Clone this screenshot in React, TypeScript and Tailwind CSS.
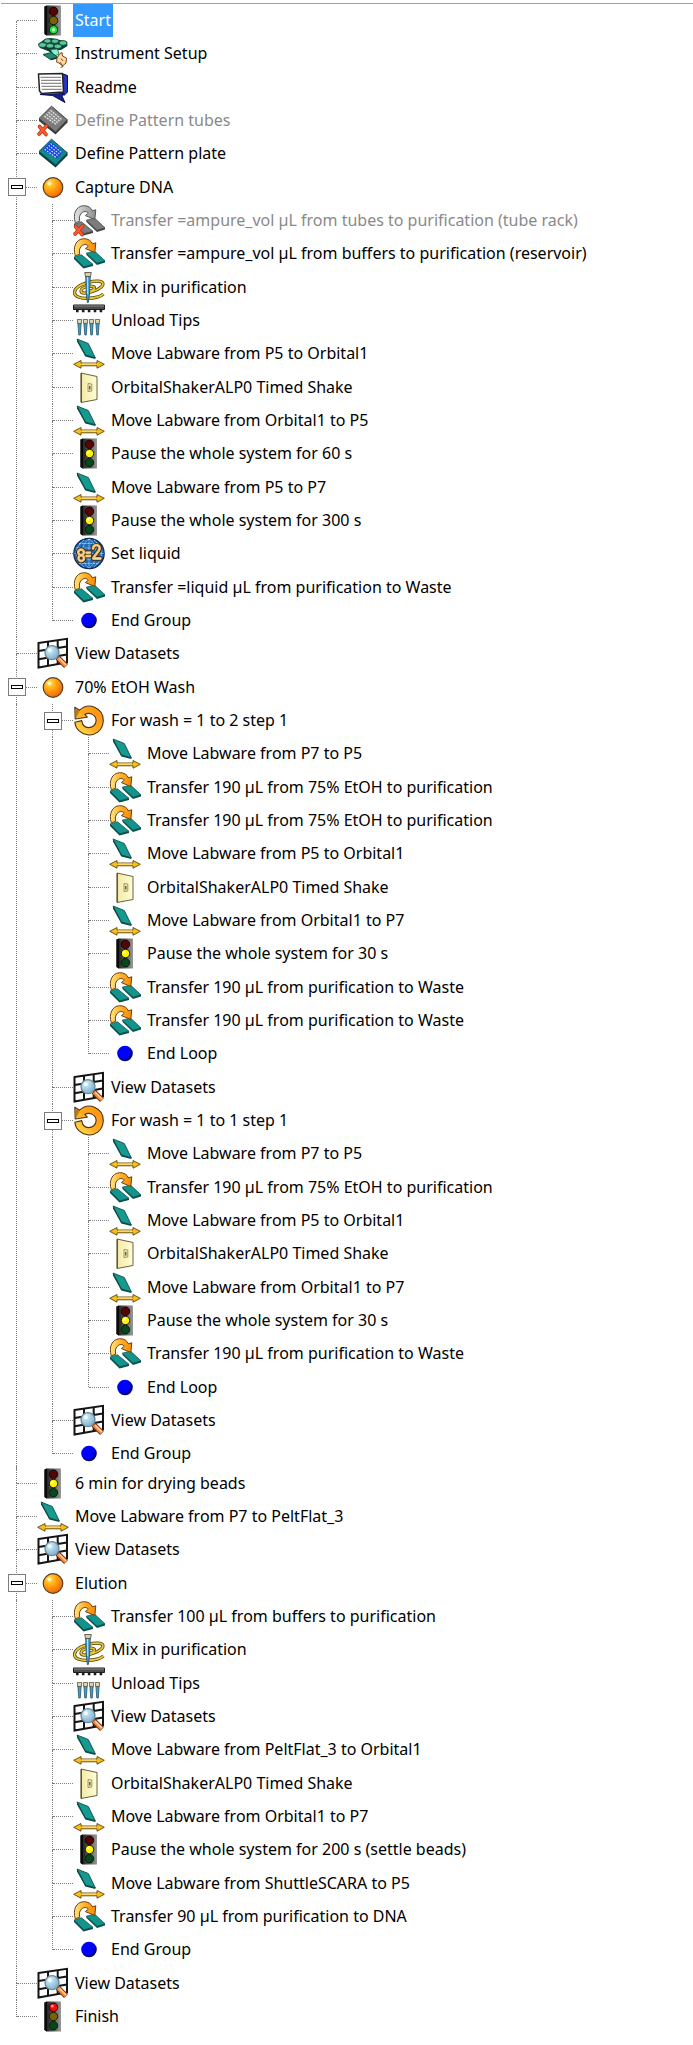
import { useState, type ReactNode } from "react";

type IconName =
  | "start" | "pause" | "finish" | "setup" | "note" | "pattern" | "patternOff"
  | "group" | "transfer" | "transferOff" | "mix" | "unload" | "move" | "orbital"
  | "liquid" | "end" | "view" | "loop";

type Step = {
  id: number;
  icon: IconName;
  label: string;
  disabled?: boolean;
  tight?: boolean;
  children?: Step[];
};

let nextId = 0;
const step = (icon: IconName, label: string, extra: Partial<Step> = {}): Step => ({
  id: nextId++,
  icon,
  label,
  ...extra,
});
const branch = (icon: IconName, label: string, build: () => Step[]): Step => {
  const node = step(icon, label);
  node.children = build();
  return node;
};

const steps: Step[] = [
  step("start", "Start"),
  step("setup", "Instrument Setup"),
  step("note", "Readme"),
  step("patternOff", "Define Pattern tubes", { disabled: true }),
  step("pattern", "Define Pattern plate"),
  branch("group", "Capture DNA", () => [
    step("transferOff", "Transfer =ampure_vol µL from tubes to purification (tube rack)", { disabled: true }),
    step("transfer", "Transfer =ampure_vol µL from buffers to purification (reservoir)"),
    step("mix", "Mix in purification"),
    step("unload", "Unload Tips"),
    step("move", "Move Labware from P5 to Orbital1"),
    step("orbital", "OrbitalShakerALP0 Timed Shake"),
    step("move", "Move Labware from Orbital1 to P5"),
    step("pause", "Pause the whole system for 60 s"),
    step("move", "Move Labware from P5 to P7"),
    step("pause", "Pause the whole system for 300 s"),
    step("liquid", "Set liquid"),
    step("transfer", "Transfer =liquid µL from purification to Waste"),
    step("end", "End Group"),
  ]),
  step("view", "View Datasets"),
  branch("group", "70% EtOH Wash", () => [
    branch("loop", "For wash = 1 to 2 step 1", () => [
      step("move", "Move Labware from P7 to P5"),
      step("transfer", "Transfer 190 µL from 75% EtOH to purification"),
      step("transfer", "Transfer 190 µL from 75% EtOH to purification"),
      step("move", "Move Labware from P5 to Orbital1"),
      step("orbital", "OrbitalShakerALP0 Timed Shake"),
      step("move", "Move Labware from Orbital1 to P7"),
      step("pause", "Pause the whole system for 30 s"),
      step("transfer", "Transfer 190 µL from purification to Waste"),
      step("transfer", "Transfer 190 µL from purification to Waste"),
      step("end", "End Loop"),
    ]),
    step("view", "View Datasets"),
    branch("loop", "For wash = 1 to 1 step 1", () => [
      step("move", "Move Labware from P7 to P5"),
      step("transfer", "Transfer 190 µL from 75% EtOH to purification"),
      step("move", "Move Labware from P5 to Orbital1"),
      step("orbital", "OrbitalShakerALP0 Timed Shake"),
      step("move", "Move Labware from Orbital1 to P7"),
      step("pause", "Pause the whole system for 30 s"),
      step("transfer", "Transfer 190 µL from purification to Waste"),
      step("end", "End Loop"),
    ]),
    step("view", "View Datasets"),
    step("end", "End Group"),
  ]),
  step("pause", "6 min for drying beads", { tight: true }),
  step("move", "Move Labware from P7 to PeltFlat_3"),
  step("view", "View Datasets"),
  branch("group", "Elution", () => [
    step("transfer", "Transfer 100 µL from buffers to purification"),
    step("mix", "Mix in purification"),
    step("unload", "Unload Tips"),
    step("view", "View Datasets"),
    step("move", "Move Labware from PeltFlat_3 to Orbital1"),
    step("orbital", "OrbitalShakerALP0 Timed Shake"),
    step("move", "Move Labware from Orbital1 to P7"),
    step("pause", "Pause the whole system for 200 s (settle beads)"),
    step("move", "Move Labware from ShuttleSCARA to P5"),
    step("transfer", "Transfer 90 µL from purification to DNA"),
    step("end", "End Group"),
  ]),
  step("view", "View Datasets"),
  step("finish", "Finish"),
];

function Gradients() {
  return (
    <svg width="0" height="0" className="block" aria-hidden="true">
      <defs>
        <linearGradient id="case">
          <stop offset="0" stopColor="#111" />
          <stop offset="0.3" stopColor="#3a3a3a" />
          <stop offset="1" stopColor="#9a9a9a" />
        </linearGradient>
        <radialGradient id="sun" cx="0.33" cy="0.28" r="0.8">
          <stop offset="0" stopColor="#ffe14a" />
          <stop offset="0.5" stopColor="#ff9d0c" />
          <stop offset="1" stopColor="#f25c05" />
        </radialGradient>
        <radialGradient id="blue" cx="0.4" cy="0.38" r="0.65">
          <stop offset="0.6" stopColor="#0000ff" />
          <stop offset="1" stopColor="#00004a" />
        </radialGradient>
        <linearGradient id="arrow">
          <stop offset="0" stopColor="#ffe680" />
          <stop offset="0.6" stopColor="#ffa51e" />
          <stop offset="1" stopColor="#f58a0a" />
        </linearGradient>
        <linearGradient id="arrowGray">
          <stop offset="0" stopColor="#e4e4e4" />
          <stop offset="1" stopColor="#8e8e8e" />
        </linearGradient>
        <linearGradient id="ring" x1="1" y1="0" x2="0" y2="1">
          <stop offset="0" stopColor="#ff8a0c" />
          <stop offset="0.5" stopColor="#ffa820" />
          <stop offset="1" stopColor="#ffe95a" />
        </linearGradient>
        <radialGradient id="lens" cx="0.35" cy="0.3" r="0.8">
          <stop offset="0" stopColor="#d8f0fa" />
          <stop offset="1" stopColor="#6fa8c8" />
        </radialGradient>
        <linearGradient id="card">
          <stop offset="0" stopColor="#f3eaa6" />
          <stop offset="1" stopColor="#fffcd8" />
        </linearGradient>
      </defs>
    </svg>
  );
}

function Light({ on }: { on: "red" | "yellow" | "green" }) {
  return (
    <>
      <path d="M7.5 1.5 10 0.5H24V30.5H9.5L7.5 29Z" fill="url(#case)" />
      <path d="M7.5 1.5 10 0.5V30.5L7.5 29Z" fill="#0a0a0a" />
      <circle cx="16.5" cy="6.3" r="4.2" fill={on === "red" ? "#f40d0d" : "#560404"} stroke="#150505" />
      <circle cx="16.5" cy="15.5" r="4.2" fill={on === "yellow" ? "#fff200" : "#7a6400"} stroke="#1c1800" />
      <circle cx="16.5" cy="24.7" r="4.2" fill={on === "green" ? "#17e63c" : "#06481c"} stroke="#03200c" />
      {on === "red" && <circle cx="15.3" cy="5.2" r="1.4" fill="#ff9a9a" />}
      {on === "yellow" && <circle cx="15.3" cy="14.3" r="1.4" fill="#ffffb0" />}
      {on === "green" && <circle cx="16.5" cy="24.7" r="1.8" fill="#b4ffc0" />}
    </>
  );
}

function Cross() {
  return (
    <g strokeLinecap="round">
      <path d="M2.5 21.5 9 29.5M9.5 21 2 29" stroke="#b8300c" strokeWidth="3.6" />
      <path d="M2.5 21.5 9 29.5M9.5 21 2 29" stroke="#ff5a30" strokeWidth="2.2" />
    </g>
  );
}

function Pattern({ off }: { off?: boolean }) {
  return (
    <>
      <path d="M2 13.5V16L18.5 29.5 30.5 17.5V14.5Z" fill={off ? "#3c3c3c" : "#0b3f40"} />
      <path d="M14.5 1.2 30.3 14.8 18.7 27 2 13.5Z" fill={off ? "#7a7a7a" : "#14888a"} stroke={off ? "#444" : "#0d4f50"} />
      <path d="M14 3.6 26 14 20 20.3 5.5 11.8Z" fill={off ? "#8a8a8a" : "#1546dc"} />
      <path
        d="M7.5 11.2 19 19.4M9.6 9.4 21 17.8M11.6 7.4 22.8 16.2M13.6 5.4 24.4 14.4"
        stroke={off ? "#f0f0f0" : "#d2e6ff"}
        strokeWidth="1.1"
        strokeDasharray="1.8 1.2"
      />
      {off && <Cross />}
    </>
  );
}

function Transfer({ off }: { off?: boolean }) {
  const plate = off ? "#7c7c7c" : "#12938c";
  const edge = off ? "#454545" : "#0b4f4c";
  return (
    <>
      <path d="M1 19V21L10.5 30.5 20 28V26.5Z" fill={edge} />
      <path d="M13.5 15.5V17L24 27 32 24.5V23Z" fill={edge} />
      <path d="M1 19 8.5 16.8 20 26.3 10.8 28.8Z" fill={plate} stroke={edge} strokeWidth="0.7" />
      <path d="M13.2 15.2 21.5 13 32 22.8 24 25.3Z" fill={plate} stroke={edge} strokeWidth="0.7" />
      <path
        d="M2.3 17.8C-0.4 9 3 1.2 10.5 0.7 15.2 0.5 18.2 2.8 19.4 5.8L22.8 4.8 21.8 14.4 12.4 10.6 15.4 8.2C13.6 5.9 10.6 6 8.4 8.2 6.2 10.5 6 13 6.8 16.2Z"
        fill={off ? "url(#arrowGray)" : "url(#arrow)"}
        stroke={off ? "#555" : "#6b4208"}
        strokeWidth="1"
        strokeLinejoin="round"
      />
      {off && <Cross />}
    </>
  );
}

const digits =
  "M8 11.6A2.8 2.8 0 1 0 8.1 11.6M8.2 17.4A2.8 2.8 0 1 0 8.3 17.4M13.5 14.6H17M13.5 18H17M20 10.5C20.5 5.8 27.3 6.3 26.6 10.8 26.2 13.8 21.5 16.6 20.3 20.5H27.4";

const art: Record<IconName, ReactNode> = {
  start: <Light on="green" />,
  pause: <Light on="yellow" />,
  finish: <Light on="red" />,
  setup: (
    <>
      <path d="M1 6 8 1 14 0 30 3.5 30.5 8 24 12 20 12 18 17 11 13 3 10Z" fill="#0d3f30" />
      <g fill="#5cc79c" stroke="#0b3d2e" strokeWidth="0.8">
        <ellipse cx="10.5" cy="3" rx="3.6" ry="2.2" />
        <ellipse cx="18" cy="3.2" rx="3.6" ry="2.2" />
        <ellipse cx="26" cy="5" rx="4" ry="2.4" />
        <ellipse cx="5.5" cy="7" rx="4" ry="2.4" />
        <ellipse cx="13" cy="7.8" rx="3.8" ry="2.3" />
        <ellipse cx="20.8" cy="8.3" rx="3.8" ry="2.3" />
      </g>
      <path d="M13.5 11.5 20.5 11 22 16 17 18.5Z" fill="#8cf0cf" stroke="#11634b" strokeWidth="0.8" />
      <path d="M6 16.5 14.5 14.5 21 19.5 13.5 21.5Z" fill="#1d8c70" stroke="#0b3d2e" strokeWidth="0.9" />
      <path d="M13.5 21.5 20 20" stroke="#0b3d2e" strokeWidth="1.6" />
      <path d="M20 20 23 15.5 25 14.5 25.5 18 29.5 20 29 25 25.5 28 22 25 19.5 24Z" fill="#ffd9a6" stroke="#7a4a1c" strokeWidth="1" strokeLinejoin="round" />
      <path d="M23 24 26 28.5 23.5 29.5M24 20.5 26 23" fill="none" stroke="#7a4a1c" strokeWidth="1" />
    </>
  ),
  note: (
    <>
      <path d="M25 1.5 30.5 3.5 30.5 20 27 23.5 24.5 21Z" fill="#2634c0" stroke="#0b1050" />
      <path d="M3 22.5 27 21.5 25 24 28 30.5 15.5 23.5Z" fill="#16208c" stroke="#0b1050" />
      <path d="M1.5 2 25.5 1.5 26.5 20 4.5 21.5 2.5 19Z" fill="#fff" stroke="#222" strokeWidth="1.5" strokeLinejoin="round" />
      <path d="M3.5 5.3H24M4 8.3H24M4 11.3H24.5M4.5 14.3H24.5M4.8 17.3H24.8" stroke="#8c8c8c" strokeWidth="1.2" />
    </>
  ),
  pattern: <Pattern />,
  patternOff: <Pattern off />,
  group: (
    <>
      <circle cx="16" cy="15.5" r="9.8" fill="url(#sun)" stroke="#55402a" strokeWidth="1.2" />
      <circle cx="12.5" cy="11.5" r="2" fill="#fff3a0" />
    </>
  ),
  transfer: <Transfer />,
  transferOff: <Transfer off />,
  mix: (
    <>
      <g fill="none">
        <path d="M30.5 22C25 27 1.5 29 1.5 20.5 2 11.5 28 5.5 30 11.5 31 17 8.5 25 8 19 8 14.5 21.5 12.5 21.5 16 21.5 18.5 15 20 13 18.5" stroke="#5a4608" strokeWidth="3.2" />
        <path d="M30.5 22C25 27 1.5 29 1.5 20.5 2 11.5 28 5.5 30 11.5 31 17 8.5 25 8 19 8 14.5 21.5 12.5 21.5 16 21.5 18.5 15 20 13 18.5" stroke="#e6c638" strokeWidth="1.7" />
      </g>
      <path d="M12.7 4H17.3L16.5 22 15.3 30.5H14.4L13.3 22Z" fill="#4aa5cf" stroke="#1b4560" strokeWidth="0.8" />
      <path d="M14.5 5 14.7 22" stroke="#b4e4f6" strokeWidth="1" />
      <path d="M11.7 0.5H18.3L17.5 4.5H12.5Z" fill="#d6cfae" stroke="#4a4636" strokeWidth="0.8" />
    </>
  ),
  unload: (
    <>
      <path d="M0.5 0H31.5V4.5H0.5Z" fill="#4c4c4c" stroke="#1c1c1c" />
      <path d="M1 1H31" stroke="#8c8c8c" />
      <path d="M3 6H29.5" stroke="#1c1c1c" strokeWidth="2.4" strokeDasharray="2.6 3.3" />
      {[4, 10, 16, 22].map((x) => (
        <g key={x} transform={`translate(${x} 14)`}>
          <path d="M0.8 3H4.2L3.3 16H1.8Z" fill="#3f9fc8" stroke="#23566e" strokeWidth="0.8" />
          <path d="M0.3 0.5H4.7L4.2 4.5H0.8Z" fill="#e0d8b4" stroke="#5c5640" strokeWidth="0.8" />
        </g>
      ))}
    </>
  ),
  move: (
    <>
      <path d="M4 1V3.5L12.3 18.5 22.3 21V19.5Z" fill="#0a4542" />
      <path d="M4 1 15.3 5.5 22.3 19.8 12.5 17Z" fill="#16998f" stroke="#0b4f4c" strokeWidth="0.9" strokeLinejoin="round" />
      <path d="M0.7 26.3 8 22.5V25H24V22.5L31.3 26.3 24 30.2V27.8H8V30.2Z" fill="#f9bd1c" stroke="#5e4608" strokeWidth="0.9" strokeLinejoin="round" />
      <path d="M9 26H23" stroke="#fff0a0" strokeWidth="1" />
    </>
  ),
  orbital: (
    <>
      <path d="M8 1 24 4.5V27.5L8 30.5Z" fill="url(#card)" stroke="#6a6238" strokeWidth="1" />
      <path d="M8.3 1.2V30.3" stroke="#4a4424" strokeWidth="1" />
      <path d="M15 11.5 18.8 12V19L15 19.6Z" fill="#f1e8b0" stroke="#8c8350" strokeWidth="0.8" />
      <path d="M16.8 14V17.4" stroke="#4a4424" strokeWidth="1.2" />
    </>
  ),
  liquid: (
    <>
      <circle cx="16" cy="15.5" r="15.2" fill="#2468b4" stroke="#0c2c5a" strokeWidth="1.2" />
      <path
        d="M16 1V30M1.5 15.5H30.5M3 10H29M3 21H29M6 5.5H26M6 25.5H26M16 1C7 6 7 25 16 30M16 1C25 6 25 25 16 30M11 2C1 10 1 21 11 29M21 2C31 10 31 21 21 29"
        fill="none"
        stroke="#a6dcf4"
        strokeWidth="0.8"
        strokeDasharray="2 0.8"
      />
      <g fill="none" strokeLinecap="round" strokeLinejoin="round">
        <path d={digits} stroke="#3d2508" strokeWidth="4.6" />
        <path d={digits} stroke="#e8b868" strokeWidth="2.8" />
        <path d={digits} stroke="#fbe3b0" strokeWidth="0.8" />
      </g>
    </>
  ),
  end: <circle cx="16" cy="15.5" r="7.8" fill="url(#blue)" />,
  view: (
    <>
      <g fill="none" stroke="#141414" strokeWidth="2">
        <path d="M1.5 5 30 0.8V24.5L1.5 29.5Z" fill="#fff" />
        <path d="M1.5 13 30 8.5M1.5 21.2 30 16.5M11 3.6V27.8M20.7 2.2V26.1" />
      </g>
      <path d="M20.5 19.5 29 28" stroke="#6e2f10" strokeWidth="5.4" />
      <path d="M21 20 28.7 27.7" stroke="#ff8a3c" strokeWidth="3.8" />
      <path d="M22.5 20.5 29 27" stroke="#ffd9b8" strokeWidth="1.2" />
      <circle cx="15" cy="14.7" r="7" fill="url(#lens)" stroke="#6c8a9c" strokeWidth="1.3" />
      <circle cx="12.8" cy="12.2" r="2" fill="#f2fbff" />
    </>
  ),
  loop: (
    <>
      <path
        d="M6.5 5.2C16 -3.5 30.5 3 30.3 15.5 30 26.5 21 30.8 14.5 29.8 7.5 28.8 2.5 24 1.8 17.3L8.8 15.6C9.2 20 12 22.5 15.5 22.6 19.5 22.6 23 20 23.1 15.8 23.2 9.8 16.5 6.8 11.8 9.4L14.3 12.2 2.2 14 1.8 2.2Z"
        fill="url(#ring)"
        stroke="#4e3510"
        strokeWidth="1.1"
        strokeLinejoin="round"
      />
      <path d="M2.6 3.6 6.4 6.6 3.2 13Z" fill="#b87c10" />
    </>
  ),
};

function Icon({ name }: { name: IconName }) {
  return (
    <svg viewBox="0 0 32 31" className="h-[31px] w-8 shrink-0 overflow-visible" aria-hidden="true">
      {art[name]}
    </svg>
  );
}

const dots = "border-dotted border-[#808080]";

/* Dotted rail with the horizontal stub, and the expander for branches */
function Rail({ top, bottom, open, label, onToggle }: {
  top: boolean;
  bottom: boolean;
  open?: boolean;
  label: string;
  onToggle?: () => void;
}) {
  return (
    <div className="grid w-[37px] shrink-0 self-stretch">
      <div className="col-start-1 row-start-1 ml-4 flex items-stretch">
        <div className="flex w-px flex-col">
          <div className={`flex-1 ${top ? `border-l ${dots}` : ""}`} />
          <div className={`flex-1 ${bottom ? `border-l ${dots}` : ""}`} />
        </div>
        <div className={`w-5 self-center border-t ${dots}`} />
      </div>
      {onToggle && (
        <button
          type="button"
          aria-label={`${open ? "Collapse" : "Expand"} ${label}`}
          onClick={onToggle}
          className="col-start-1 row-start-1 ml-2 flex size-[18px] items-center justify-center self-center border border-[#7c7c7c] bg-white"
        >
          <span className="h-1 w-3 border border-black bg-white" />
        </button>
      )}
    </div>
  );
}

function Branch({ items, depth, selected, onSelect }: {
  items: Step[];
  depth: number;
  selected: number;
  onSelect: (id: number) => void;
}) {
  const [closed, setClosed] = useState<number[]>([]);
  return (
    <ul role={depth === 0 ? "tree" : "group"} className="min-w-0 flex-1">
      {items.map((item, i) => {
        const last = i === items.length - 1;
        const open = !closed.includes(item.id);
        const tone = selected === item.id
          ? "bg-[#3399ff] text-white"
          : item.disabled
            ? "text-[#8a8a8a]"
            : "text-black";
        return (
          <li
            key={item.id}
            role="treeitem"
            aria-selected={selected === item.id}
            aria-expanded={item.children ? open : undefined}
            className={item.tight ? "-mt-1" : ""}
          >
            <div className={`flex items-center ${item.id % 3 === 2 ? "h-[34px]" : "h-[33px]"}`}>
              <Rail
                top={depth > 0 || i > 0}
                bottom={!last}
                open={open}
                label={item.label}
                onToggle={
                  item.children
                    ? () => setClosed(open ? [...closed, item.id] : closed.filter((c) => c !== item.id))
                    : undefined
                }
              />
              <Icon name={item.icon} />
              <button
                type="button"
                onClick={() => onSelect(item.id)}
                className={`ml-1 self-stretch px-0.5 pb-px whitespace-nowrap ${tone}`}
              >
                {item.label}
              </button>
            </div>
            {item.children && open && (
              <div className="flex">
                <div className="w-9 shrink-0 pl-4">
                  <div className={`h-full w-px ${last ? "" : `border-l ${dots}`}`} />
                </div>
                <Branch items={item.children} depth={depth + 1} selected={selected} onSelect={onSelect} />
              </div>
            )}
          </li>
        );
      })}
    </ul>
  );
}

export default function App() {
  const [selected, setSelected] = useState(0);
  return (
    <main className="min-h-screen bg-white font-['Noto_Sans',sans-serif] text-[16px] leading-6">
      <Gradients />
      <div className="ml-px h-1 border-b border-[#a0a0a0]" />
      <Branch items={steps} depth={0} selected={selected} onSelect={setSelected} />
    </main>
  );
}
